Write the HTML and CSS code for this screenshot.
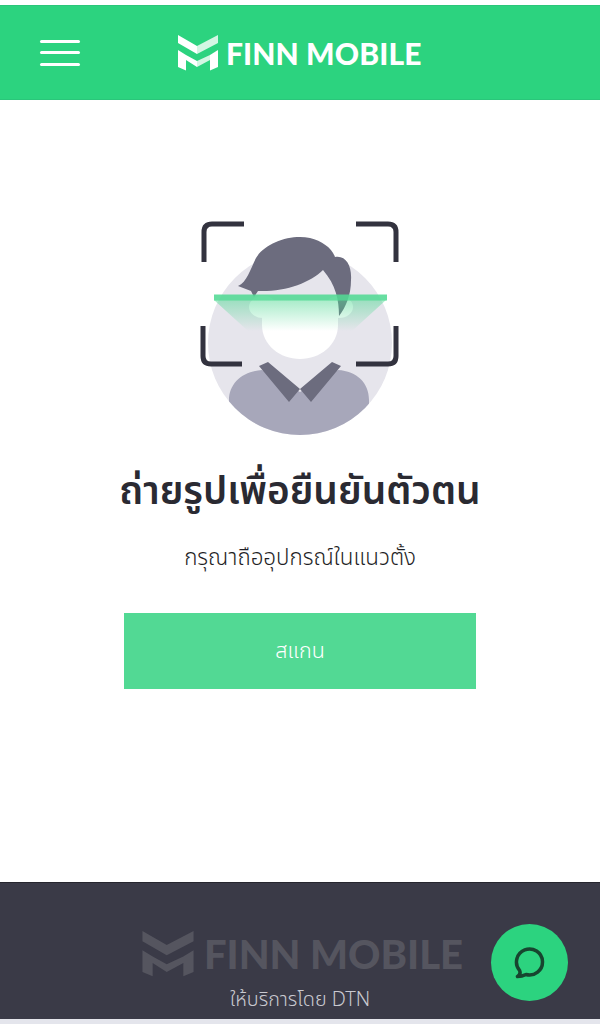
FILE: index.html
```html
<!DOCTYPE html>
<html lang="th">
<head>
<meta charset="utf-8">
<title>FINN MOBILE</title>
<link rel="stylesheet" href="styles.css">
</head>
<body>
<div class="page">
  <header class="header">
    <button class="menu" aria-label="menu"><span></span><span></span><span></span></button>
    <div class="brand">
      <svg class="mark" viewBox="0 0 40 36"><path fill="#fff" d="M0 0 19 11V19L0 8ZM0 15 8 20V35.500L0 32ZM8 20 19 26V32L8 25Z"/><path fill="#d4f6e4" d="M40 0 19 11V19L40 8ZM19 26 32 20V25L19 32Z"/><path fill="#fff" d="M40 15 32 20V35.500L40 32Z"/></svg>
      <span class="word">FINN MOBILE</span>
    </div>
  </header>
  <main class="main">
    <svg class="scan" viewBox="190 210 220 235" width="220" height="235">
      <defs>
        <linearGradient id="g" x1="0" y1="0" x2="0" y2="1"><stop offset="0" stop-color="#52d994" stop-opacity=".5"/><stop offset="1" stop-color="#52d994" stop-opacity="0"/></linearGradient>
        <clipPath id="c"><circle cx="300" cy="343" r="92"/></clipPath>
      </defs>
      <circle cx="300" cy="343" r="92" fill="#e6e5ec"/>
      <g clip-path="url(#c)"><path fill="#a7a7ba" d="M229 400C229 383 243 371 262 370L300 392 338 370C357 371 369 383 369 400V445H229Z"/></g>
      <path fill="#fff" d="M262 300H338V325C338 345 320 359 300 359 280 359 262 345 262 325Z"/>
      <ellipse cx="263" cy="307" rx="14" ry="11" fill="#fff"/><ellipse cx="339" cy="307" rx="14" ry="11" fill="#fff"/>
      <path fill="#6c6c7e" d="M259 366 268 362 300 389 289 402ZM341 366 332 362 300 389 311 402Z"/>
      <path fill="#6c6c7e" d="M238 286C247 282 250 270 256 258 265 243 290 234 310 238 322 241 332 248 335 257 346 255 352 266 351 280 351 295 346 307 339 316 339 300 336 285 323 270 310 283 285 292 258 291L254 297 251 291Z"/>
      <path fill="url(#g)" d="M214 300H386L352 331H248Z"/>
      <rect x="214" y="294.500" width="173" height="6" fill="#52d994" opacity=".88"/>
      <g fill="none" stroke="#33333f" stroke-width="5">
        <path d="M204 262V232Q204 224 212 224H244"/>
        <path d="M356 224H388Q396 224 396 232V262"/>
        <path d="M203 326V356Q203 364 211 364H242"/>
        <path d="M356 364H388Q396 364 396 356V326"/>
      </g>
    </svg>
    <h1 class="title">ถ่ายรูปเพื่อยืนยันตัวตน</h1>
    <p class="hint">กรุณาถืออุปกรณ์ในแนวตั้ง</p>
    <button class="scan-btn">สแกน</button>
  </main>
  <footer class="footer">
    <div class="foot-brand">
      <svg class="foot-mark" viewBox="0 0 40 36"><path fill="#55555f" d="M0 0 19 11 40 0V8L19 19 0 8ZM0 15 8 20 19 26 32 20 40 15V32L32 35.500V25L19 32 8 25V35.500L0 32Z"/></svg>
      <span class="foot-word">FINN MOBILE</span>
    </div>
    <div class="provider">ให้บริการโดย DTN</div>
    <button class="chat" aria-label="chat">
      <svg viewBox="0 0 32 32" width="32" height="32"><path fill="none" stroke="#17452f" stroke-width="3.500" stroke-linecap="round" stroke-linejoin="round" d="M3.500 29.500C6.500 29.500 10 28.500 12 27.500A13 13 0 1 0 5.500 23.300C6.500 25.500 6 28 3.500 29.500Z"/></svg>
    </button>
  </footer>
</div>
</body>
</html>
```
FILE: styles.css
```css
* { box-sizing: border-box; }
html, body { margin: 0; height: 100%; }
body { background: #fff; font-family: "Noto Sans", "Noto Sans Thai", "Liberation Sans", sans-serif; }
.page { height: 1024px; padding-top: 5px; display: flex; flex-direction: column; background: #fff; border-bottom: 5px solid #e4e5ec; position: relative; }
.header { height: 95px; background: #2cd37f; display: flex; align-items: center; padding: 0 0 0 40px; border-top: 1px solid #2ac67a; border-bottom: 1px solid #2ac67a; }
.menu { width: 40px; height: 26px; padding: 0; border: 0; background: none; display: flex; flex-direction: column; justify-content: space-between; }
.menu span { display: block; height: 3px; background: #fff; border-radius: 2px; }
.brand { display: flex; align-items: center; gap: 8px; margin-left: 98px; }
.mark { width: 40px; height: 36px; }
.word { font-family: Lato, sans-serif; font-weight: 900; font-size: 30px; letter-spacing: .1px; color: #fff; }
.main { flex: 1; display: flex; flex-direction: column; align-items: center; padding-top: 110px; }
.scan { display: block; }
.title { margin: 21px 0 0; font-size: 38.800px; line-height: 46px; font-weight: 600; color: #2a2a32; }
.hint { margin: 30px 0 0; font-size: 22.400px; line-height: 30px; font-weight: 300; color: #1f1f26; }
.scan-btn { width: 352px; height: 76px; margin-top: 41px; border: 0; background: #52d994; color: #fff; font: inherit; font-size: 21.500px; font-weight: 300; }
.footer { height: 137px; background: #3a3a47; display: flex; flex-direction: column; align-items: center; padding: 48px 0 0 3px; position: relative; border-top: 1px solid #26262e; }
.foot-brand { display: flex; align-items: center; gap: 10px; margin-left: 2px; }
.foot-mark { width: 52px; height: 46px; }
.foot-word { font-family: Lato, sans-serif; font-weight: 900; font-size: 40px; line-height: 46px; color: #55555f; }
.provider { margin: 10px 3px 0 0; font-size: 19.800px; line-height: 24px; font-weight: 300; color: #c9c9d0; }
.chat { position: absolute; left: 491px; top: 41px; width: 77px; height: 77px; border-radius: 50%; border: 0; background: #2cd37f; display: flex; align-items: center; justify-content: center; padding: 0; }
```
